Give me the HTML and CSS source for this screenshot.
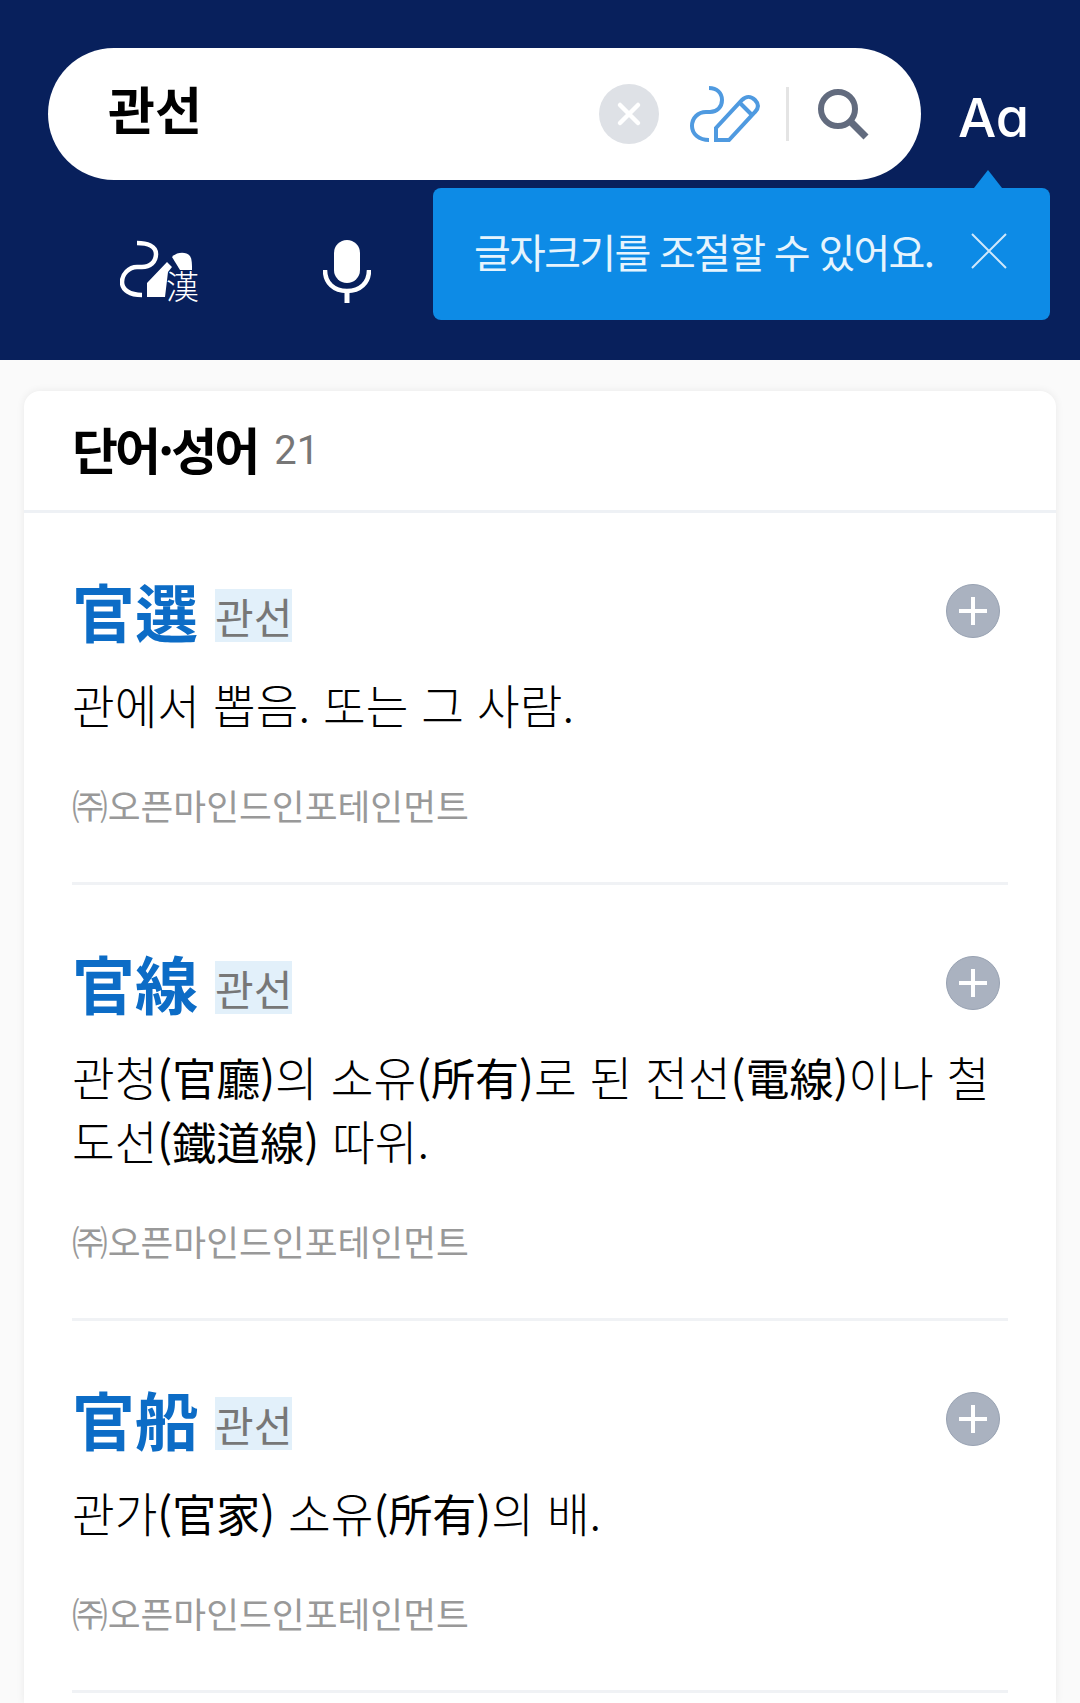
FILE: index.html
```html
<!DOCTYPE html>
<html lang="ko">
<head>
  <meta charset="UTF-8" />
  <meta name="viewport" content="width=device-width, initial-scale=1.0" />
  <title>관선</title>
  <link rel="stylesheet" href="styles.css">
</head>
<body>
  <header class="top">
    <div class="search-row">
      <div class="search-box">
        <span class="query">관선</span>
        <span class="clear">
          <svg width="26" height="26" viewBox="0 0 26 26"><path d="M4 4L22 22M22 4L4 22" stroke="#fff" stroke-width="4.5" stroke-linecap="round"/></svg>
        </span>
        <svg class="pen" width="72" height="56" viewBox="0 0 72 56" fill="none" stroke="#4f9ae0" stroke-width="4">
          <path d="M20 2C28 2 33 7 33 14C33 21 28 26 21 26H17C9 26 3 32 3 40C3 48 10 54 20 54"/>
          <path d="M27 54V42L53 14C57 10 62 10 66 14C70 18 70 22 66 26L40 54Z"/>
          <path d="M51 17L63 29"/>
        </svg>
        <span class="sep"></span>
        <svg class="glass" width="54" height="54" viewBox="0 0 54 54" fill="none" stroke="#626b7e" stroke-width="6">
          <circle cx="22" cy="22" r="17"/>
          <path d="M34 34L50 50" stroke-width="7"/>
        </svg>
      </div>
      <span class="aa">Aa</span>
    </div>
    <div class="tool-row">
      <div class="hanja-btn">
        <svg width="80" height="60" viewBox="0 0 80 60" fill="none">
          <path d="M17 3C27 3 36 6 36 14C36 22 30 27 22 27H17C9 27 2 34 2 42C2 50 10 55 22 55" stroke="#fff" stroke-width="4.5"/>
          <path d="M27 57V43L47 22L52 27L48 32L45 57Z" fill="#fff"/>
          <path d="M52 17C56 12 66 11 70 16C72 19 72 24 72 30H60Z" fill="#fff"/>
        </svg>
        <span class="han">漢</span>
      </div>
      <svg class="mic" width="48" height="64" viewBox="0 0 48 64" fill="none">
        <rect x="11" y="0" width="26" height="43" rx="13" fill="#fff"/>
        <path d="M2 30C2 43 11 51 24 51C37 51 46 43 46 30" stroke="#fff" stroke-width="4.5"/>
        <path d="M24 51V63" stroke="#fff" stroke-width="5"/>
      </svg>
    </div>
    <div class="tip">
      <span class="tip-text">글자크기를 조절할 수 있어요.</span>
      <svg width="38" height="38" viewBox="0 0 38 38"><path d="M2 2L36 36M36 2L2 36" stroke="#cfe8fb" stroke-width="2"/></svg>
    </div>
  </header>

  <main class="page">
    <section class="card">
      <div class="card-head">
        <h2>단어·성어</h2>
        <span class="count">21</span>
      </div>

      <article class="item">
        <div class="item-title">
          <span class="word">官選</span>
          <span class="reading">관선</span>
          <span class="plus"></span>
        </div>
        <p class="def">관에서 뽑음. 또는 그 사람.</p>
        <p class="source">㈜오픈마인드인포테인먼트</p>
      </article>

      <article class="item">
        <div class="item-title">
          <span class="word">官線</span>
          <span class="reading">관선</span>
          <span class="plus"></span>
        </div>
        <p class="def">관청<span class="hj">(官廳)</span>의 소유<span class="hj">(所有)</span>로 된 전선<span class="hj">(電線)</span>이나 철<br>도선<span class="hj">(鐵道線)</span> 따위.</p>
        <p class="source">㈜오픈마인드인포테인먼트</p>
      </article>

      <article class="item">
        <div class="item-title">
          <span class="word">官船</span>
          <span class="reading">관선</span>
          <span class="plus"></span>
        </div>
        <p class="def">관가<span class="hj">(官家)</span> 소유<span class="hj">(所有)</span>의 배.</p>
        <p class="source">㈜오픈마인드인포테인먼트</p>
      </article>
    </section>
  </main>
</body>
</html>
```

FILE: styles.css
```css
body {
  margin: 0;
  height: 1703px;
  overflow: hidden;
  background-color: #fafafa;
  font-family: 'Noto Sans CJK KR', 'Noto Sans', sans-serif;
  color: #000;
}
.top {
  position: relative;
  height: 360px;
  box-sizing: border-box;
  padding: 48px 0 0 48px;
  background-color: #08205c;
}
.search-row {
  display: flex;
  align-items: center;
}
.search-box {
  display: flex;
  align-items: center;
  box-sizing: border-box;
  width: 873px;
  height: 132px;
  padding: 0 51px 0 60px;
  border-radius: 66px;
  background-color: #fff;
}
.query {
  flex: 1;
  font-size: 51px;
  font-weight: 700;
  line-height: 1;
  margin-top: -12px;
}
.clear {
  display: flex;
  align-items: center;
  justify-content: center;
  width: 60px;
  height: 60px;
  border-radius: 50%;
  background-color: #dee1e6;
}
.pen {
  margin-left: 30px;
}
.sep {
  width: 3px;
  height: 54px;
  margin: 0 27px 0 25px;
  background-color: #e4e4e4;
}
.aa {
  margin: 6px 0 0 37px;
  font-family: 'Inter', sans-serif;
  font-size: 54px;
  font-weight: 500;
  font-feature-settings: 'cv11';
  color: #fff;
}
.tool-row {
  display: flex;
  align-items: flex-start;
  padding: 60px 0 0 72px;
}
.hanja-btn {
  position: relative;
  width: 80px;
  height: 60px;
}
.han {
  position: absolute;
  left: 46px;
  top: 29px;
  font-size: 33px;
  font-weight: 300;
  line-height: 1;
  color: #fff;
}
.mic {
  margin-left: 123px;
}
.tip {
  position: absolute;
  left: 433px;
  top: 188px;
  display: flex;
  align-items: center;
  box-sizing: border-box;
  width: 617px;
  height: 132px;
  padding: 0 0 6px 41px;
  border-radius: 8px;
  background-color: #0d8be6;
}
.tip::before {
  content: "";
  position: absolute;
  left: 541px;
  top: -18px;
  border-left: 14px solid transparent;
  border-right: 14px solid transparent;
  border-bottom: 18px solid #0d8be6;
}
.tip-text {
  width: 496px;
  font-size: 40px;
  letter-spacing: -1.7px;
  line-height: 1;
  color: #e6f4fd;
  white-space: nowrap;
}
.page {
  padding: 31px 24px 0;
}
.card {
  min-height: 1312px;
  background-color: #fff;
  border-radius: 16px 16px 0 0;
  box-shadow: 0 0 8px rgba(0, 0, 0, 0.07);
}
.card-head {
  display: flex;
  align-items: center;
  gap: 17px;
  height: 122px;
  box-sizing: border-box;
  padding: 0 0 0 48px;
  border-bottom: 3px solid #eef1f5;
}
.card-head h2 {
  margin: -6px 0 0;
  font-size: 50px;
  font-weight: 700;
  letter-spacing: -3px;
}
.count {
  font-family: 'Roboto', sans-serif;
  font-size: 40px;
  color: #777;
}
.item {
  margin: 0 48px;
  padding: 68px 0 51px;
  border-bottom: 3px solid #f0f2f5;
}
.item-title {
  display: flex;
  align-items: center;
  height: 60px;
}
.word {
  margin-top: -2px;
  font-size: 63px;
  font-weight: 700;
  line-height: 60px;
  color: #0c6cc6;
}
.reading {
  margin: 8px 0 0 17px;
  font-size: 42px;
  line-height: 53px;
  color: #777;
  background-color: #e2f0fa;
}
.plus {
  position: relative;
  margin-left: auto;
  margin-right: 8px;
  width: 54px;
  height: 54px;
  box-sizing: border-box;
  border: 1px solid #98a2b2;
  border-radius: 50%;
  background-color: #aab2c0;
}
.plus::before,
.plus::after {
  content: "";
  position: absolute;
  background-color: #fff;
}
.plus::before {
  left: 12px;
  top: 24px;
  width: 28px;
  height: 4px;
}
.plus::after {
  left: 24px;
  top: 12px;
  width: 4px;
  height: 28px;
}
.def {
  margin: 31px 0 0;
  font-size: 46.4px;
  line-height: 64px;
  font-weight: 300;
}
.hj {
  font-size: 44px;
  line-height: 1;
  font-weight: 400;
}
.source {
  margin: 43px 0 0;
  font-size: 35.7px;
  line-height: 52px;
  color: #999;
}
```
